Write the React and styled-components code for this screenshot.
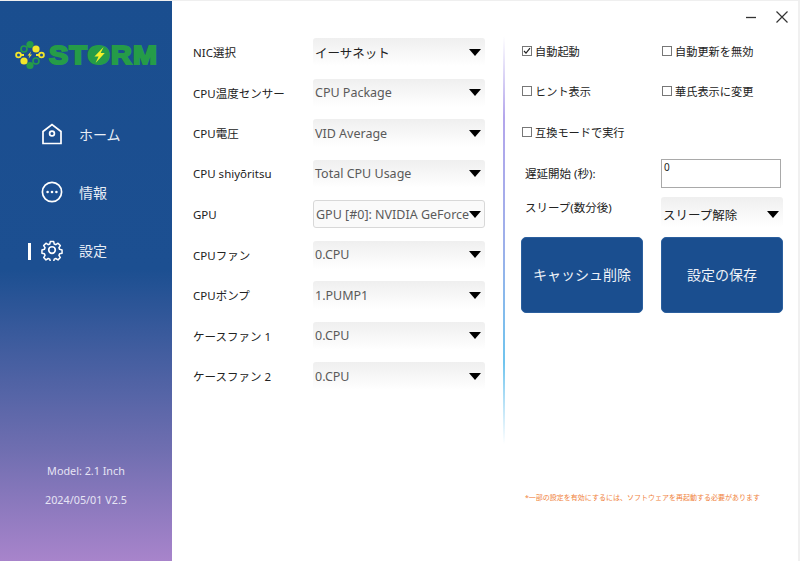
import React from "react";
import styled, { createGlobalStyle } from "styled-components";

const Global = createGlobalStyle`
  html, body { margin: 0; padding: 0; background: #fff; }
  #root { width: 800px; height: 561px; overflow: hidden; }
  * { box-sizing: border-box; }
`;

const FONT = `"Noto Sans", "Noto Sans CJK JP", sans-serif`;

const Window = styled.div`
  width: 800px;
  height: 561px;
  display: flex;
  background: #fff;
  font-family: ${FONT};
  color: #222;
  border-top: 1px solid #efefef;
`;

const Sidebar = styled.aside`
  width: 172px;
  height: 100%;
  flex: none;
  display: flex;
  flex-direction: column;
  background: linear-gradient(180deg, #1a4e8f 0%, #1c4f91 48%, #6f6eb0 80%, #a884cb 100%);
  color: #fff;
`;

const LogoWrap = styled.div`
  display: flex;
  align-items: center;
  height: 30px;
  margin: 39px 0 0 15px;
  gap: 4px;
`;

const LogoWord = styled.div`
  position: relative;
  font-family: "Liberation Sans", sans-serif;
  font-weight: 700;
  font-size: 25px;
  line-height: 30px;
  letter-spacing: 1px;
  color: #259c48;
  -webkit-text-stroke: 2px #259c48;
  transform: scaleX(1.15);
  transform-origin: left center;
`;

const LogoBolt = styled.svg`
  position: absolute;
  left: 34px;
  top: 5px;
`;

const Nav = styled.nav`
  display: flex;
  flex-direction: column;
  gap: 28px;
  margin-top: 49px;
`;

const NavItem = styled.div`
  position: relative;
  height: 30px;
  display: flex;
  align-items: center;
  gap: 16px;
  padding-left: 41px;
  font-size: 14px;
  color: #e8eef6;
`;

const ActiveBar = styled.span`
  position: absolute;
  left: 28px;
  top: 8px;
  width: 3px;
  height: 17px;
  background: #fff;
`;

const SideFoot = styled.div`
  margin-top: auto;
  margin-bottom: 53px;
  display: flex;
  flex-direction: column;
  align-items: center;
  gap: 13px;
  font-size: 10.8px;
  line-height: 16px;
  color: #e6e4f4;
`;

const Main = styled.main`
  flex: 1;
  position: relative;
  display: flex;
  border-right: 2px solid #f0f0f0;
  padding: 37px 0 0 21px;
`;

const WinControls = styled.div`
  position: absolute;
  top: 9px;
  right: 9px;
  display: flex;
  align-items: center;
  gap: 18px;
`;

const LeftCol = styled.section`
  width: 292px;
  display: flex;
  flex-direction: column;
  gap: 12.5px;
  flex: none;
`;

const Row = styled.div`
  display: grid;
  grid-template-columns: 120px 172px;
  align-items: center;
`;

const Label = styled.span`
  font-size: 11.5px;
  color: #222;
  white-space: nowrap;
`;

const Select = styled.div`
  height: 28px;
  display: flex;
  align-items: center;
  justify-content: space-between;
  padding: 0 4px 0 2px;
  border-radius: 3px;
  font-size: 12.5px;
  color: ${p => (p.$dark ? "#222" : "#5a5a5a")};
  white-space: nowrap;
  overflow: hidden;
  background: ${p => (p.$focus ? "#fafafa" : "linear-gradient(180deg, #efefef 0%, #ffffff 100%)")};
  border: ${p => (p.$focus ? "1px solid #d8d8d8" : "none")};
  padding-right: ${p => (p.$focus ? "3px" : "4px")};
`;

const Caret = styled.span`
  flex: none;
  width: 0;
  height: 0;
  border-left: 6px solid transparent;
  border-right: 6px solid transparent;
  border-top: 7px solid #000;
`;

const Divider = styled.div`
  width: 2px;
  height: 408px;
  margin: -2px 0 0 18px;
  flex: none;
  background: linear-gradient(180deg, #ffffff 0%, #b4a6ec 20%, #9cb0ea 52%, #6fc4ee 80%, #ffffff 100%);
`;

const RightCol = styled.section`
  width: 262px;
  margin-left: 16px;
  flex: none;
  display: flex;
  flex-direction: column;
`;

const CheckGrid = styled.div`
  display: grid;
  grid-template-columns: 140px 122px;
  grid-auto-rows: 40.5px;
  margin-top: -1px;
`;

const CheckItem = styled.label`
  display: flex;
  align-items: center;
  gap: 3px;
  height: 27px;
  padding-left: 1px;
  font-size: 11.2px;
  color: #222;
  white-space: nowrap;
`;

const Box = styled.span`
  width: 10px;
  height: 10px;
  flex: none;
  border: 1px solid #777;
  background: #fff;
  display: flex;
  align-items: center;
  justify-content: center;
`;

const FormGrid = styled.div`
  display: grid;
  grid-template-columns: 140px 122px;
  margin-top: 0;
`;

const FormLabel = styled.span`
  padding-left: 4px;
  font-size: 11.5px;
  color: #222;
  display: flex;
  align-items: center;
  white-space: nowrap;
`;

const TextInput = styled.div`
  width: 120px;
  height: 29px;
  border: 1px solid #a9a9a9;
  font-size: 10px;
  line-height: 13px;
  padding: 1px 2px;
  color: #222;
`;

const SleepLabel = styled(FormLabel)`
  align-items: flex-start;
  margin-top: 11px;
`;

const SleepSelect = styled(Select)`
  margin-top: 9px;
  height: 30px;
  padding: 5px 4px 0 2px;
  color: #222;
`;

const Actions = styled.div`
  display: grid;
  grid-template-columns: 122px 122px;
  column-gap: 18px;
  margin-top: 10px;
`;

const Button = styled.button`
  height: 76px;
  background: #1a4e8f;
  color: #eef2f8;
  border: 1px solid #2b5f9e;
  border-radius: 5px;
  font-family: ${FONT};
  font-size: 14px;
  padding: 0 0 2px;
`;

const Note = styled.p`
  margin: 179px 0 0 4px;
  font-size: 7px;
  line-height: 12px;
  color: #f0823c;
  white-space: nowrap;
`;

const LEFT = [
  ["NIC選択", "イーサネット", { dark: true }],
  ["CPU温度センサー", "CPU Package"],
  ["CPU電圧", "VID Average"],
  ["CPU shiyōritsu", "Total CPU Usage"],
  ["GPU", "GPU [#0]: NVIDIA GeForce", { focus: true }],
  ["CPUファン", "0.CPU"],
  ["CPUポンプ", "1.PUMP1"],
  ["ケースファン 1", "0.CPU"],
  ["ケースファン 2", "0.CPU"],
];

const LogoMark = () => (
  <svg width="30" height="30" viewBox="0 0 30 30">
    <g fill="none" stroke="#259c48" strokeWidth="1.6">
      <circle cx="9" cy="9" r="3" />
      <circle cx="21" cy="21" r="3" />
    </g>
    <circle cx="15" cy="4.5" r="3.6" fill="#259c48" />
    <circle cx="15" cy="25.5" r="3.6" fill="#259c48" />
    <g fill="none" stroke="#f2e62a" strokeWidth="1.8">
      <circle cx="3.5" cy="15" r="2.4" />
      <circle cx="26.5" cy="15" r="2.4" />
      <path d="M6 15h3M21 15h3" />
    </g>
    <circle cx="9" cy="21" r="3.6" fill="#f2e62a" />
    <circle cx="21" cy="9" r="3.6" fill="#f2e62a" />
    <path d="M16 11.5l-3.4 4h2l-1 3 3.4-4h-2z" fill="#f2e62a" />
  </svg>
);

const HomeIcon = () => (
  <svg width="22" height="22" viewBox="0 0 22 22" fill="none" stroke="#fff" strokeWidth="1.7">
    <path d="M2 8.5 11 1.5l9 7V20.5H2z" />
    <circle cx="11" cy="10.5" r="2.4" />
  </svg>
);

const InfoIcon = () => (
  <svg width="22" height="22" viewBox="0 0 22 22" fill="none">
    <circle cx="11" cy="11" r="9.6" stroke="#fff" strokeWidth="1.7" />
    <circle cx="6.6" cy="11" r="1.3" fill="#fff" />
    <circle cx="11" cy="11" r="1.3" fill="#fff" />
    <circle cx="15.4" cy="11" r="1.3" fill="#fff" />
  </svg>
);

const GearIcon = () => (
  <svg width="22" height="22" viewBox="0 0 24 24" fill="none" stroke="#fff" strokeWidth="1.8" strokeLinejoin="round">
    <circle cx="12" cy="12" r="3.6" />
    <path d="M10 1.6h4l.7 3.1 1.9.8 2.7-1.7 2.8 2.9-1.7 2.6.8 1.9 3 .7v4l-3 .7-.8 1.9 1.7 2.7-2.8 2.8-2.7-1.7-1.9.8-.7 3h-4l-.7-3-1.9-.8-2.7 1.7-2.8-2.8 1.7-2.7-.8-1.9-3-.7v-4l3-.7.8-1.9-1.7-2.6 2.8-2.9 2.7 1.7 1.9-.8z" transform="translate(1.2 1.2) scale(.9)" />
  </svg>
);

const Check = ({ checked, children }) => (
  <CheckItem>
    <Box>
      {checked && (
        <svg width="8" height="8" viewBox="0 0 8 8" fill="none" stroke="#222" strokeWidth="1.2">
          <path d="M1 4l2 2.2L7 1.2" />
        </svg>
      )}
    </Box>
    {children}
  </CheckItem>
);

export default function App() {
  return (
    <>
      <Global />
      <Window>
        <Sidebar>
          <LogoWrap>
            <LogoMark />
            <LogoWord>
              STORM
              <LogoBolt width="20" height="20" viewBox="0 0 20 20">
                <circle cx="10" cy="10" r="8.5" fill="#259c48" />
                <path d="M13.5 2 5.5 11.5h3.6L6.5 18l8-10h-3.6z" fill="#f2f02a" stroke="none" />
              </LogoBolt>
            </LogoWord>
          </LogoWrap>
          <Nav>
            <NavItem><HomeIcon />ホーム</NavItem>
            <NavItem><InfoIcon />情報</NavItem>
            <NavItem><ActiveBar /><GearIcon />設定</NavItem>
          </Nav>
          <SideFoot>
            <span>Model: 2.1 Inch</span>
            <span>2024/05/01 V2.5</span>
          </SideFoot>
        </Sidebar>
        <Main>
          <WinControls>
            <svg width="12" height="12" viewBox="0 0 12 12" stroke="#333" strokeWidth="1.3"><path d="M1 6.5h10" /></svg>
            <svg width="14" height="14" viewBox="0 0 14 14" stroke="#333" strokeWidth="1.2"><path d="M1.5 1.5l11 11M12.5 1.5l-11 11" /></svg>
          </WinControls>
          <LeftCol>
            {LEFT.map(([label, value, o = {}]) => (
              <Row key={label}>
                <Label>{label}</Label>
                <Select $dark={o.dark} $focus={o.focus}>
                  {value}
                  <Caret />
                </Select>
              </Row>
            ))}
          </LeftCol>
          <Divider />
          <RightCol>
            <CheckGrid>
              <Check checked>自動起動</Check>
              <Check>自動更新を無効</Check>
              <Check>ヒント表示</Check>
              <Check>華氏表示に変更</Check>
              <Check>互換モードで実行</Check>
            </CheckGrid>
            <FormGrid>
              <FormLabel>遅延開始 (秒):</FormLabel>
              <TextInput>0</TextInput>
              <SleepLabel>スリープ(数分後)</SleepLabel>
              <SleepSelect $dark>スリープ解除<Caret /></SleepSelect>
            </FormGrid>
            <Actions>
              <Button>キャッシュ削除</Button>
              <Button>設定の保存</Button>
            </Actions>
            <Note>*一部の設定を有効にするには、ソフトウェアを再起動する必要があります</Note>
          </RightCol>
        </Main>
      </Window>
    </>
  );
}
